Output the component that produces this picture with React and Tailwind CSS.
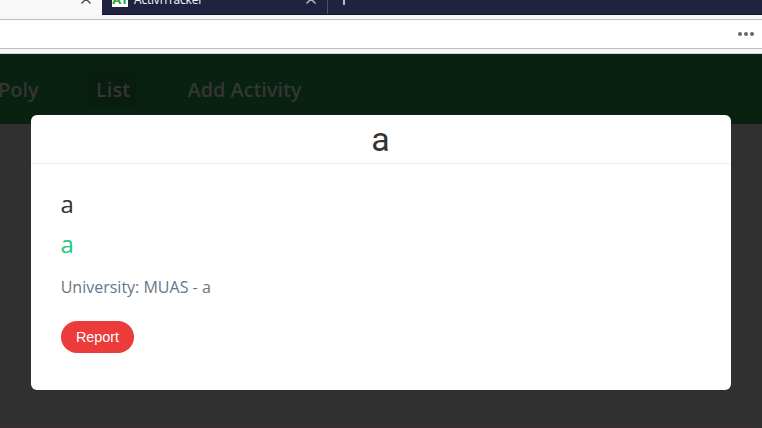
function TabBar() {
  return (
    <div className="flex h-[15px] shrink-0 overflow-hidden font-['Open_Sans',sans-serif]">
      <div className="flex w-[102px] justify-end bg-[#f9f9fa] pr-[11px]">
        <svg className="mt-[-6px] shrink-0" width="10" height="10" viewBox="0 0 10 10" stroke="#555558" strokeWidth="1.5">
          <path d="M.5.5 9.5 9.5M9.5.5.5 9.5" />
        </svg>
      </div>
      <div className="flex h-[15px] grow border-b border-[#17152f] bg-[#202340]">
        <div className="flex w-[226px] border-r border-[#4d4f66] pl-[10px] pr-[11px]">
          <div className="mt-[-9px] h-4 w-4 shrink-0 overflow-hidden bg-white text-center text-[13px] leading-[17px] font-bold tracking-[-0.5px] text-[#28a745]">
            AT
          </div>
          <div className="mt-[-9px] ml-[6px] grow text-[12px] leading-[18px] font-medium tracking-[-0.2px] text-[#f9f9fa]">
            ActiviTracker
          </div>
          <svg className="mt-[-6px] shrink-0" width="10" height="10" viewBox="0 0 10 10" stroke="#b5b6c2" strokeWidth="1.5">
            <path d="M.5.5 9.5 9.5M9.5.5.5 9.5" />
          </svg>
        </div>
        <div className="ml-[15px] h-[5px] w-[2px] bg-[#b9bac7]" />
      </div>
    </div>
  );
}

function AddressBar() {
  return (
    <div className="shrink-0 border-b border-[#d5d5d5] bg-[#f7f7f8] pt-1 pb-1">
      <div className="flex h-[30px] items-center justify-end gap-[2px] border-y border-[#bfbfbf] bg-white pr-2">
        <span className="h-1 w-1 rounded-full bg-[#666]" />
        <span className="h-1 w-1 rounded-full bg-[#666]" />
        <span className="h-1 w-1 rounded-full bg-[#666]" />
      </div>
    </div>
  );
}

export default function App() {
  return (
    <div className="relative flex h-[428px] w-[762px] flex-col overflow-hidden bg-[#303030] font-['Open_Sans',sans-serif]">
      <TabBar />
      <AddressBar />
      <nav className="flex h-[70px] shrink-0 items-center bg-[#082111] pt-[1px] text-[20px] leading-[34px] font-semibold text-[#353535]">
        <span className="-ml-[2px] w-[91px] whitespace-nowrap">Poly</span>
        <span className="w-12 rounded bg-[#081d0f] text-center">List</span>
        <span className="ml-[50.5px] tracking-[-0.08px]">Add Activity</span>
      </nav>
      <div className="mt-auto h-px bg-[#382d34]" />
      <section className="absolute top-[115px] left-[31px] h-[275px] w-[700px] rounded-md bg-white">
        <h1 className="h-[49px] border-b border-[#ebebeb] pr-px text-center font-['Roboto',sans-serif] text-[34px] leading-[49px] text-[#333]">
          a
        </h1>
        <div className="px-[30px] pt-6">
          <h2 className="-ml-[0.5px] text-[24px] leading-8 text-[#333]">a</h2>
          <h3 className="mt-2 -ml-[0.5px] text-[24px] leading-8 text-[#20c97f]">a</h3>
          <p className="mt-[15px] -ml-[0.3px] text-[16px] leading-6 text-[#657786]">University: MUAS - a</p>
          <button className="mt-[22px] block h-8 w-[73px] rounded-full bg-[#eb3b3b] text-center font-['Liberation_Sans',sans-serif] text-[14.4px] leading-8 text-white">
            Report
          </button>
        </div>
      </section>
    </div>
  );
}
